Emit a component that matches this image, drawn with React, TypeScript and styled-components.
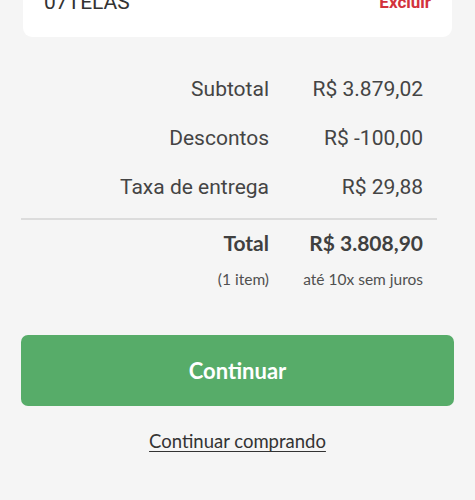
import React from 'react'
import styled, { createGlobalStyle } from 'styled-components'

const GlobalStyle = createGlobalStyle`
  html, body {
    margin: 0;
    padding: 0;
    background: #f5f5f5;
    overflow: hidden;
  }
  * {
    box-sizing: border-box;
  }
`

const Page = styled.div`
  width: 475px;
  height: 500px;
  background: #f5f5f5;
  overflow: hidden;
  display: flex;
  flex-direction: column;
`

const ItemCard = styled.div`
  margin: -30px 23px 0 23px;
  height: 67px;
  background: #fff;
  border-radius: 0 0 9px 9px;
  display: flex;
  justify-content: space-between;
  align-items: flex-end;
  padding: 0 21px 23px 21px;
  font-family: Roboto, "Liberation Sans", sans-serif;
  font-size: 21px;
  line-height: 24px;
`

const ItemName = styled.span`
  color: #333;
`

const RemoveLink = styled.span`
  color: #d2323d;
  font-weight: 700;
  font-size: 17px;
`

const Summary = styled.div`
  margin: 27px 38px 0 21px;
  display: flex;
  flex-direction: column;
`

const Row = styled.div<{ $height: number }>`
  display: grid;
  grid-template-columns: 1fr 154px;
  height: ${p => p.$height}px;
  align-items: center;
  padding-right: 14px;
  font-family: Roboto, "Liberation Sans", sans-serif;
  font-size: 21px;
  color: #444;
`

const Label = styled.span`
  text-align: right;
`

const Value = styled.span`
  text-align: right;
`

const Divider = styled.hr`
  margin: 7px 0 0 0;
  border: none;
  height: 2px;
  background: #dcdcdc;
`

const TotalRow = styled(Row)`
  font-family: Lato, "Liberation Sans", sans-serif;
  font-weight: 700;
  color: #404040;
  font-size: 21px;
`

const NoteRow = styled(Row)`
  font-family: Lato, "Liberation Sans", sans-serif;
  font-size: 15.5px;
  color: #505050;
`

const Actions = styled.div`
  margin: 42px 21px 0 21px;
  display: flex;
  flex-direction: column;
  align-items: center;
`

const ContinueButton = styled.button`
  width: 100%;
  height: 71px;
  border: none;
  border-radius: 7px;
  background: #57ac69;
  color: #fff;
  font-family: Lato, "Liberation Sans", sans-serif;
  font-weight: 700;
  font-size: 22px;
  cursor: pointer;
`

const KeepShopping = styled.a`
  margin-top: 24px;
  font-family: Lato, "Liberation Sans", sans-serif;
  font-size: 18.5px;
  color: #333;
  text-decoration: underline;
  text-underline-offset: 3px;
  text-decoration-thickness: 1px;
`

export default function App() {
  return (
    <>
      <GlobalStyle />
      <Page>
        <ItemCard>
          <ItemName>07TELAS</ItemName>
          <RemoveLink>Excluir</RemoveLink>
        </ItemCard>
        <Summary>
          <Row $height={49}>
            <Label>Subtotal</Label>
            <Value>R$ 3.879,02</Value>
          </Row>
          <Row $height={49}>
            <Label>Descontos</Label>
            <Value>R$ -100,00</Value>
          </Row>
          <Row $height={49}>
            <Label>Taxa de entrega</Label>
            <Value>R$ 29,88</Value>
          </Row>
          <Divider />
          <TotalRow $height={45}>
            <Label>Total</Label>
            <Value>R$ 3.808,90</Value>
          </TotalRow>
          <NoteRow $height={28}>
            <Label>(1 item)</Label>
            <Value>até 10x sem juros</Value>
          </NoteRow>
        </Summary>
        <Actions>
          <ContinueButton>Continuar</ContinueButton>
          <KeepShopping>Continuar comprando</KeepShopping>
        </Actions>
      </Page>
    </>
  )
}
